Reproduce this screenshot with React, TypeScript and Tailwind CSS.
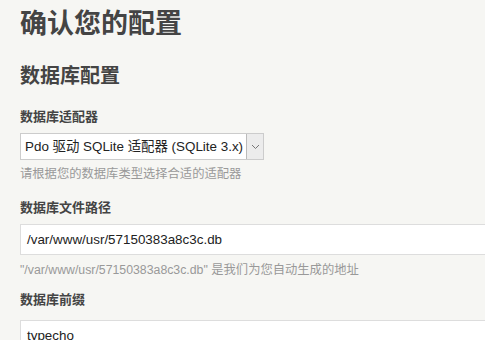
import React from "react";

const font = { fontFamily: '"Liberation Sans", "Noto Sans CJK SC", sans-serif' };

export default function App() {
  return (
    <div
      className="w-[485px] h-[340px] overflow-hidden bg-[#f6f6f3] text-[#444] pl-5"
      style={font}
    >
      <h1 className="pt-[7px] text-[27px] leading-[34px] font-bold">确认您的配置</h1>
      <h2 className="mt-[22px] text-[20px] leading-[26px] font-bold">数据库配置</h2>

      <div className="mt-[19px]">
        <label className="block text-[13px] leading-[18px] font-bold">数据库适配器</label>
        <div className="mt-[7px] inline-flex items-stretch h-[27px] bg-white border border-[#ccc]">
          <span className="pl-[4px] pr-[3px] text-[13.4px] leading-[25px] text-[#222] whitespace-nowrap">
            Pdo 驱动 SQLite 适配器 (SQLite 3.x)
          </span>
          <span className="w-[17px] flex items-center justify-center border-l border-[#bbb] bg-[#ececec]">
            <svg width="9" height="6" viewBox="0 0 9 6">
              <path d="M1 1l3.5 3.5L8 1" fill="none" stroke="#777" strokeWidth="1" />
            </svg>
          </span>
        </div>
        <p className="mt-[6px] text-[12.3px] leading-[16px] text-[#999]">
          请根据您的数据库类型选择合适的适配器
        </p>
      </div>

      <div className="mt-[17px]">
        <label className="block text-[13px] leading-[18px] font-bold">数据库文件路径</label>
        <div className="mt-[7px] w-[500px] h-[31px] bg-white border border-[#ddd] pl-[6px] text-[13.4px] leading-[29px] text-[#222]">
          /var/www/usr/57150383a8c3c.db
        </div>
        <p className="mt-[7px] text-[12.3px] leading-[16px] text-[#999]">
          "/var/www/usr/57150383a8c3c.db" 是我们为您自动生成的地址
        </p>
      </div>

      <div className="mt-[13px]">
        <label className="block text-[13px] leading-[18px] font-bold">数据库前缀</label>
        <div className="mt-[11px] w-[500px] h-[31px] bg-white border border-[#ddd] pl-[6px] text-[13.4px] leading-[29px] text-[#222]">
          typecho
        </div>
      </div>
    </div>
  );
}
